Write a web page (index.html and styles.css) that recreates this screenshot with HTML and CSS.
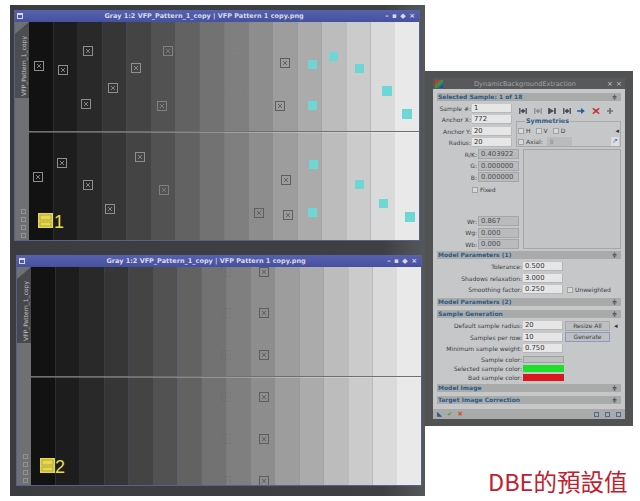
FILE: index.html
```html
<!DOCTYPE html>
<html lang="zh-Hant">

<head>
    <meta charset="UTF-8">
    <title>DBE defaults</title>
    <link rel="stylesheet" href="styles.css">
</head>

<body>
    <svg class="defs" width="0" height="0">
        <defs>
            <g id="m">
                <rect x="-4.5" y="-4.5" width="9" height="9" fill="none" stroke="currentColor" stroke-width="1" />
                <path d="M-2 -2L2 2M2 -2L-2 2" stroke="currentColor" stroke-width="0.9" />
            </g>
            <g id="strips">
                <rect x="0" width="24.4" height="218" fill="#121212" />
                <rect x="24.4" width="24.4" height="218" fill="#1d1d1d" />
                <rect x="48.8" width="24.4" height="218" fill="#292929" />
                <rect x="73.2" width="24.4" height="218" fill="#363636" />
                <rect x="97.6" width="24.4" height="218" fill="#444444" />
                <rect x="122" width="24.4" height="218" fill="#525252" />
                <rect x="146.4" width="24.4" height="218" fill="#626262" />
                <rect x="170.8" width="24.4" height="218" fill="#727272" />
                <rect x="195.2" width="24.4" height="218" fill="#7f7f7f" />
                <rect x="219.6" width="24.4" height="218" fill="#8d8d8d" />
                <rect x="244" width="24.4" height="218" fill="#9d9d9d" />
                <rect x="268.4" width="24.4" height="218" fill="#ababab" />
                <rect x="292.8" width="24.4" height="218" fill="#bcbcbc" />
                <rect x="317.2" width="24.4" height="218" fill="#cbcbcb" />
                <rect x="341.6" width="24.4" height="218" fill="#dadada" />
                <rect x="366" width="24.4" height="218" fill="#e9e9e9" />
            </g>
            <g id="badge">
                <rect x="9" y="191" width="15" height="15" fill="#e6d84c" />
                <rect x="11" y="193" width="11" height="5" fill="none" stroke="#a8983a" stroke-width="0.8" />
                <rect x="11" y="200" width="11" height="4" fill="none" stroke="#a8983a" stroke-width="0.8" />
            </g>
            <symbol id="nav-first" viewBox="0 0 9 7">
                <path d="M0 0h1.5v7H0zM7.5 0H9v7H7.5zM1.5 3.5L4.5 1v5zM7.5 3.5L4.5 1v5z" fill="currentColor" />
            </symbol>
            <symbol id="nav-next" viewBox="0 0 9 7">
                <path d="M0 0h2v7H0zM7 0h2v7H7zM2 1l5 2.5L2 6z" fill="currentColor" />
            </symbol>
            <symbol id="nav-go" viewBox="0 0 9 7">
                <path d="M0 2.5h4.5V0L9 3.5 4.5 7V4.5H0z" fill="currentColor" />
            </symbol>
            <symbol id="nav-del" viewBox="0 0 9 7">
                <path d="M1.5 0L4.5 2 7.5 0 9 1 5.8 3.5 9 6 7.5 7 4.5 5 1.5 7 0 6 3.2 3.5 0 1z" fill="currentColor" />
            </symbol>
            <symbol id="nav-add" viewBox="0 0 9 7">
                <path d="M3.5 0h2v2.5H8v2H5.500V7h-2V4.500H1v-2h2.500z" fill="currentColor" />
            </symbol>
        </defs>
    </svg>

    <div class="desktop">
        <div class="view view-one">
            <div class="view-title">
                <span class="win-icon"></span>
                <span class="view-name">Gray 1:2 VFP_Pattern_1_copy | VFP Pattern 1 copy.png</span>
                <span class="win-btns">– ▪ ◆ ×</span>
            </div>
            <div class="view-body">
                <div class="side-tabs">
                    <div class="side-tab"><span>VFP_Pattern_1_copy</span></div>
                    <div class="side-tools">
                        <i></i><i></i><i></i><i></i>
                    </div>
                </div>
                <svg class="picture" width="390" height="218" viewBox="0 0 390 218">
                    <use href="#strips" />
                    <rect x="0" y="109" width="390" height="1" fill="#707070" />
                    <rect x="0" y="110" width="390" height="1" fill="#fff" opacity="0.25" />
                    <g class="mark">
                        <use href="#m" x="10" y="44" />
                        <use href="#m" x="34" y="48" />
                        <use href="#m" x="59" y="29" />
                        <use href="#m" x="84" y="66" />
                        <use href="#m" x="57" y="82" />
                        <use href="#m" x="33" y="141" />
                        <use href="#m" x="9" y="155" />
                        <use href="#m" x="59" y="163" />
                        <use href="#m" x="81" y="187" />
                        <use href="#m" x="111" y="135" />
                        <use href="#m" x="107" y="46" />
                    </g>
                    <g class="mark mark-faint">
                        <use href="#m" x="139" y="29" />
                        <use href="#m" x="133" y="84" />
                        <use href="#m" x="135" y="168" />
                        <use href="#m" x="209" y="31" />
                        <use href="#m" x="207" y="67" />
                        <use href="#m" x="207" y="130" />
                    </g>
                    <g class="mark mark-dark">
                        <use href="#m" x="256" y="41" />
                        <use href="#m" x="251" y="84" />
                        <use href="#m" x="257" y="158" />
                        <use href="#m" x="230" y="191" />
                        <use href="#m" x="259" y="193" />
                    </g>
                    <g fill="#6fd6d6">
                        <rect x="279" y="38" width="9" height="9" />
                        <rect x="300" y="30" width="9" height="9" />
                        <rect x="326" y="42" width="9" height="9" />
                        <rect x="353" y="64" width="10" height="10" />
                        <rect x="373" y="87" width="10" height="10" />
                        <rect x="279" y="79" width="9" height="9" />
                        <rect x="280" y="138" width="9" height="9" />
                        <rect x="326" y="158" width="9" height="9" />
                        <rect x="350" y="177" width="9" height="9" />
                        <rect x="376" y="190" width="10" height="10" />
                        <rect x="279" y="186" width="9" height="9" />
                    </g>
                    <use href="#badge" />
                    <text class="badge-num" x="25" y="206">1</text>
                </svg>
            </div>
        </div>

        <div class="view view-two">
            <div class="view-title">
                <span class="win-icon"></span>
                <span class="view-name">Gray 1:2 VFP_Pattern_1_copy | VFP Pattern 1 copy.png</span>
                <span class="win-btns">– ▪ ◆ ×</span>
            </div>
            <div class="view-body">
                <div class="side-tabs">
                    <div class="side-tab side-tab-dim"><span>VFP_Pattern_1_copy</span></div>
                    <div class="side-tools">
                        <i></i><i></i><i></i><i></i>
                    </div>
                </div>
                <svg class="picture" width="390" height="218" viewBox="0 0 390 218">
                    <use href="#strips" />
                    <rect x="0" y="109" width="390" height="1" fill="#707070" />
                    <rect x="0" y="110" width="390" height="1" fill="#fff" opacity="0.25" />
                    <g class="mark mark-ghost">
                        <use href="#m" x="157" y="5" />
                        <use href="#m" x="157" y="46" />
                        <use href="#m" x="157" y="88" />
                        <use href="#m" x="157" y="130" />
                        <use href="#m" x="157" y="172" />
                        <use href="#m" x="195" y="5" />
                        <use href="#m" x="195" y="46" />
                        <use href="#m" x="195" y="88" />
                        <use href="#m" x="195" y="130" />
                        <use href="#m" x="195" y="172" />
                        <use href="#m" x="195" y="214" />
                    </g>
                    <g class="mark mark-dark">
                        <use href="#m" x="233" y="5" />
                        <use href="#m" x="233" y="46" />
                        <use href="#m" x="233" y="88" />
                        <use href="#m" x="233" y="130" />
                        <use href="#m" x="233" y="172" />
                        <use href="#m" x="233" y="214" />
                    </g>
                    <use href="#badge" />
                    <text class="badge-num" x="24" y="206">2</text>
                </svg>
            </div>
        </div>
    </div>

    <div class="right-col">
        <div class="dbe-back">
            <div class="dbe">
                <div class="dbe-title">
                    <span class="dbe-logo"></span>
                    <span class="dbe-name">DynamicBackgroundExtraction</span>
                    <span class="dbe-btns">× ×</span>
                </div>

                <div class="dbe-body">
                    <div class="section">Selected Sample: 1 of 18<b>≑</b></div>

                    <div class="sample-top">
                        <div class="fields">
                            <div class="line"><label>Sample #:</label><span class="box">1</span></div>
                            <div class="line"><label>Anchor X:</label><span class="box">772</span></div>
                            <div class="line"><label>Anchor Y:</label><span class="box">20</span></div>
                            <div class="line"><label>Radius:</label><span class="box">20</span></div>
                        </div>
                        <div class="sample-side">
                            <div class="nav-btns">
                                <svg width="8" height="6"><use href="#nav-first" /></svg>
                                <svg class="off" width="8" height="6"><use href="#nav-first" /></svg>
                                <svg width="8" height="6"><use href="#nav-next" /></svg>
                                <svg width="8" height="6"><use href="#nav-first" /></svg>
                                <svg class="blue" width="8" height="6"><use href="#nav-go" /></svg>
                                <svg class="red" width="8" height="6"><use href="#nav-del" /></svg>
                                <svg class="grey" width="8" height="6"><use href="#nav-add" /></svg>
                            </div>
                            <fieldset class="sym">
                                <legend>Symmetries</legend>
                                <div class="sym-row">
                                    <i class="chk"></i>H<i class="chk"></i>V<i class="chk"></i>D
                                    <em class="tiny-btn">◂</em>
                                </div>
                                <div class="sym-row">
                                    <i class="chk"></i>Axial:<span class="spin">8</span>
                                    <em class="tiny-btn tiny-blue">↗</em>
                                </div>
                            </fieldset>
                        </div>
                    </div>

                    <div class="sample-values">
                        <div class="values">
                            <div class="line"><label>R/K:</label><span class="box box-ro">0.403922</span></div>
                            <div class="line"><label>G:</label><span class="box box-ro">0.000000</span></div>
                            <div class="line"><label>B:</label><span class="box box-ro">0.000000</span></div>
                            <div class="fixed"><i class="chk"></i>Fixed</div>
                            <div class="line"><label>Wr:</label><span class="box box-ro">0.867</span></div>
                            <div class="line"><label>Wg:</label><span class="box box-ro">0.000</span></div>
                            <div class="line"><label>Wb:</label><span class="box box-ro">0.000</span></div>
                        </div>
                        <div class="sample-graph"></div>
                    </div>

                    <div class="section">Model Parameters (1)<b>≑</b></div>
                    <div class="params">
                        <div class="param"><label>Tolerance:</label><span class="box">0.500</span></div>
                        <div class="param"><label>Shadows relaxation:</label><span class="box">3.000</span></div>
                        <div class="param"><label>Smoothing factor:</label><span class="box">0.250</span><span class="unw"><i class="chk"></i>Unweighted</span></div>
                    </div>

                    <div class="section">Model Parameters (2)<b>≑</b></div>
                    <div class="section">Sample Generation<b>≑</b></div>
                    <div class="params">
                        <div class="param"><label>Default sample radius:</label><span class="box">20</span><span class="btn">Resize All</span><em class="tiny-btn">◂</em></div>
                        <div class="param"><label>Samples per row:</label><span class="box">10</span><span class="btn btn-focus">Generate</span></div>
                        <div class="param"><label>Minimum sample weight:</label><span class="box">0.750</span></div>
                        <div class="param param-swatch"><label>Sample color:</label><span class="swatch swatch-grey"></span></div>
                        <div class="param param-swatch"><label>Selected sample color:</label><span class="swatch swatch-green"></span></div>
                        <div class="param param-swatch"><label>Bad sample color:</label><span class="swatch swatch-red"></span></div>
                    </div>

                    <div class="section">Model Image<b>≑</b></div>
                    <div class="section">Target Image Correction<b>≑</b></div>
                </div>

                <div class="dbe-foot">
                    <span class="foot-a">◣</span><span class="foot-b">✔</span><span class="foot-c">✖</span>
                    <span class="foot-right"><i></i><i></i><i></i></span>
                </div>
            </div>
        </div>
        <p class="caption">DBE的預設值</p>
    </div>
</body>

</html>
```

FILE: styles.css
```css
* {
    margin: 0;
    padding: 0;
    box-sizing: border-box;
}

body {
    width: 640px;
    height: 501px;
    overflow: hidden;
    background: #fff;
    display: flex;
    align-items: flex-start;
    padding: 5px 0 0 10px;
    font-family: "DejaVu Sans", sans-serif;
    color: #3c3e40;
}

.defs {
    position: absolute;
}

.desktop {
    width: 415px;
    height: 491px;
    flex: none;
    background: linear-gradient(90deg, #3b3c3f 0%, #3f4043 90%, #55585a 100%);
    display: flex;
    flex-direction: column;
    padding-top: 5px;
}

.view {
    width: 406px;
    height: 231px;
    background: #666a90;
    border: 1px solid #5a5f8c;
    border-top: 0;
}

.view-one {
    margin-left: 4px;
}

.view-two {
    margin-left: 6px;
    margin-top: 14px;
}

.view-title {
    height: 12px;
    background: linear-gradient(#5762ad, #4650a0);
    display: flex;
    align-items: center;
    padding: 0 4px 0 2px;
    color: #d8dae8;
}

.win-icon {
    width: 6px;
    height: 6px;
    border: 1px solid #d8dae8;
    border-top-width: 2px;
}

.view-name {
    flex: 1;
    text-align: center;
    font-size: 6.5px;
    font-weight: bold;
    white-space: nowrap;
}

.win-btns {
    font-size: 7px;
    font-weight: bold;
    word-spacing: 1px;
    white-space: nowrap;
}

.view-body {
    display: flex;
    height: 218px;
}

.side-tabs {
    width: 14px;
    flex: none;
    background: #6f7074;
    display: flex;
    flex-direction: column;
    justify-content: space-between;
}

.side-tab {
    height: 76px;
    background: #4c4d50;
    color: #c4c4c4;
    font-size: 6px;
    display: flex;
    align-items: center;
    justify-content: center;
    padding: 12px 0 0 2px;
    clip-path: polygon(0 12px, 100% 0, 100% 100%, 0 100%);
}

.side-tab span {
    writing-mode: vertical-rl;
    transform: rotate(180deg);
    white-space: nowrap;
}

.side-tab-dim {
    background: #47484b;
}

.side-tools {
    display: flex;
    flex-direction: column;
    align-items: center;
    gap: 3px;
    padding: 0 0 2px 2px;
}

.side-tools i {
    width: 5px;
    height: 5px;
    border: 1px solid #8f9094;
}

.picture {
    display: block;
    flex: none;
}

.mark {
    color: #8e8e8e;
}

.mark-faint {
    color: #818181;
}

.mark-ghost {
    color: #666;
    opacity: 0.2;
}

.mark-dark {
    color: #5e5e5e;
}

.badge-num {
    font-family: "Liberation Sans", sans-serif;
    font-size: 18px;
    fill: #e8dc50;
}

/* right side */

.right-col {
    width: 215px;
    flex: none;
    padding-top: 66px;
}

.dbe-back {
    width: 208px;
    height: 355px;
    background: #505254;
    padding: 7px 0 0 8px;
}

.dbe {
    width: 192px;
    height: 341px;
    background: #c5c7c9;
    display: flex;
    flex-direction: column;
}

.dbe-title {
    height: 11px;
    background: #58595b;
    color: #a3a4a6;
    font-size: 6.6px;
    display: flex;
    align-items: center;
    padding: 0 3px 0 2px;
}

.dbe-logo {
    width: 8px;
    height: 8px;
    background: linear-gradient(135deg, #d03030 20%, #30a040 50%, #2040c0 90%);
}

.dbe-name {
    flex: 1;
    text-align: center;
    white-space: nowrap;
}

.dbe-btns {
    font-size: 7px;
    color: #c8c8c8;
    word-spacing: 1px;
}

.dbe-body {
    flex: 1;
    padding: 4px 4px 0;
    font-size: 6px;
    white-space: nowrap;
}

.section {
    height: 8px;
    margin-bottom: 4px;
    background: #a9abab;
    color: #2d5a84;
    font-weight: bold;
    font-size: 6px;
    line-height: 8px;
    display: flex;
    justify-content: space-between;
    padding: 0 1px;
}

.section b {
    color: #444;
    padding-right: 3px;
}

.sample-top {
    display: flex;
    gap: 4px;
    height: 45px;
    margin-top: -1px;
}

.fields {
    display: flex;
    flex-direction: column;
    gap: 2.4px;
    width: 75px;
}

.line {
    display: flex;
    align-items: center;
    height: 9px;
}

.line label {
    width: 35px;
    flex: none;
    display: flex;
    justify-content: flex-end;
    padding-right: 1px;
}

.box {
    display: block;
    width: 40px;
    height: 9px;
    line-height: 9px;
    background: #e6e6e6;
    border: 1px solid #b4b6b8;
    border-width: 0 1px 1px 0;
    padding-left: 2px;
    font-size: 6.8px;
    color: #333;
    flex: none;
}

.box-ro {
    background: #b9bbbd;
    color: #4a4c4e;
    height: 10px;
    width: 41px;
    border: 1px solid #a4a6a8;
    line-height: 8px;
}

.sample-side {
    flex: 1;
    display: flex;
    flex-direction: column;
}

.nav-btns {
    height: 14px;
    display: flex;
    justify-content: space-between;
    align-items: center;
    padding: 0 7px 0 3px;
    color: #4a4c55;
}

.nav-btns .off {
    color: #8d8f92;
}

.nav-btns .blue {
    color: #2a5f98;
}

.nav-btns .red {
    color: #c23030;
}

.nav-btns .grey {
    color: #6d7472;
}

.sym {
    border: 1px solid #a8aaac;
    height: 29px;
    padding: 0 1px;
}

.sym legend {
    color: #2d5a84;
    font-weight: bold;
    margin-left: 7px;
    padding: 0 1px;
    line-height: 7px;
    font-size: 6.4px;
}

.sym-row {
    display: flex;
    align-items: center;
    height: 11px;
    gap: 2px;
}

.sym-row .chk + .chk {
    margin-left: 3px;
}

.chk {
    display: inline-block;
    width: 6px;
    height: 6px;
    background: #d8d9da;
    border: 1px solid #a0a2a4;
}

.spin {
    width: 25px;
    height: 9px;
    margin-left: 2px;
    background: #b9bbbd;
    color: #8b8d8f;
    padding-left: 3px;
    line-height: 9px;
}

.tiny-btn {
    margin-left: auto;
    font-style: normal;
    font-size: 7px;
    color: #333;
}

.tiny-blue {
    color: #3a5fa8;
    background: #dcdde0;
    width: 8px;
    text-align: center;
    height: 9px;
    line-height: 9px;
}

.sample-values {
    display: flex;
    height: 100px;
    margin-bottom: 2px;
}

.values {
    width: 86px;
    flex: none;
    display: flex;
    flex-direction: column;
    gap: 1.5px;
}

.values .line {
    height: 10px;
}

.values .line label {
    width: 41px;
}

.fixed {
    height: 33px;
    padding-left: 35px;
    display: flex;
    align-items: flex-start;
    gap: 2px;
    line-height: 9px;
    margin-top: 1px;
}

.fixed .chk {
    margin-top: 2px;
}

.sample-graph {
    flex: 1;
    background: #c2c4c6;
    border: 1px solid #a4a6a8;
}

.params {
    display: flex;
    flex-direction: column;
    gap: 2.5px;
    margin-top: -1px;
    margin-bottom: 4px;
}

.param {
    display: flex;
    align-items: center;
    height: 9px;
}

.param label {
    width: 86px;
    flex: none;
    display: flex;
    justify-content: flex-end;
    padding-right: 1px;
}

.unw {
    margin-left: 4px;
    display: flex;
    align-items: center;
    gap: 2px;
}

.btn {
    width: 45px;
    height: 10px;
    margin-left: 2px;
    text-align: center;
    background: #bdbfc1;
    border: 1px solid #a6a8aa;
    line-height: 8px;
}

.btn-focus {
    border-color: #8d9ac0;
}

.param .tiny-btn {
    margin-left: 4px;
}

.param-swatch {
    height: 7px;
    margin-bottom: -0.5px;
}

.swatch {
    width: 41px;
    height: 7px;
}

.swatch-grey {
    background: #bdbfc0;
    border: 1px solid #9fa1a2;
}

.swatch-green {
    background: #1ede2e;
}

.swatch-red {
    background: #d8181c;
}

.dbe-foot {
    height: 10px;
    background: #a9abab;
    display: flex;
    align-items: center;
    gap: 5px;
    padding: 0 4px;
    font-size: 6.5px;
}

.foot-a {
    color: #2d5a84;
}

.foot-b {
    color: #5c9a3c;
}

.foot-c {
    color: #c0603c;
}

.foot-right {
    margin-left: auto;
    display: flex;
    gap: 6px;
}

.foot-right i {
    width: 5px;
    height: 5px;
    border: 1px solid #4a6c90;
}

.caption {
    margin: 41px 0 0 63px;
    font-family: "Noto Sans CJK TC", sans-serif;
    font-size: 23.5px;
    line-height: 28px;
    color: #c2202e;
    white-space: nowrap;
}
```
